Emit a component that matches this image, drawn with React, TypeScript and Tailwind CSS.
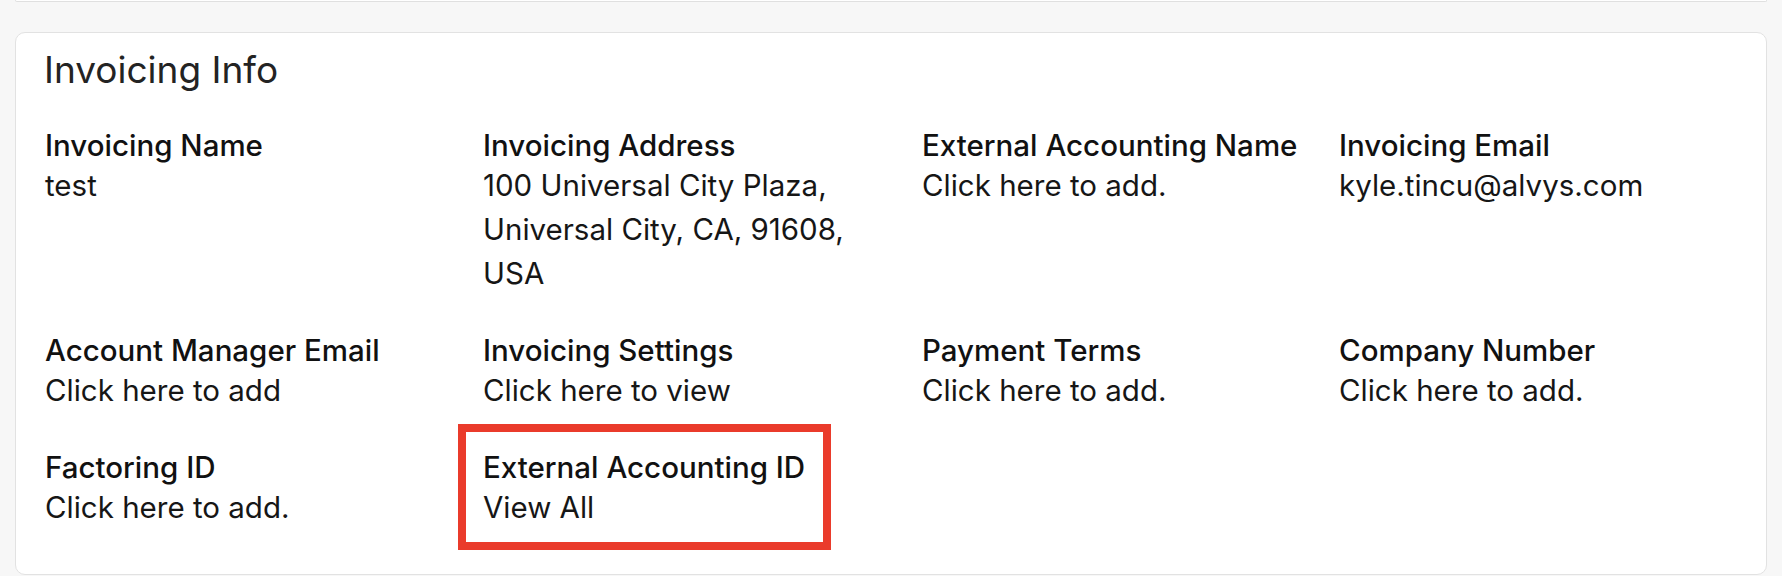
const fields: { label: string; value: React.ReactNode; highlight?: boolean }[] = [
  { label: 'Invoicing Name', value: 'test' },
  {
    label: 'Invoicing Address',
    value: (
      <>
        100 Universal City Plaza,
        <br />
        Universal City, CA, 91608,
        <br />
        USA
      </>
    ),
  },
  { label: 'External Accounting Name', value: 'Click here to add.' },
  { label: 'Invoicing Email', value: 'kyle.tincu@alvys.com' },
  { label: 'Account Manager Email', value: 'Click here to add' },
  { label: 'Invoicing Settings', value: 'Click here to view' },
  { label: 'Payment Terms', value: 'Click here to add.' },
  { label: 'Company Number', value: 'Click here to add.' },
  { label: 'Factoring ID', value: 'Click here to add.' },
  { label: 'External Accounting ID', value: 'View All', highlight: true },
]

function Field({ label, value, highlight }: { label: string; value: React.ReactNode; highlight?: boolean }) {
  return (
    <div className="relative">
      {highlight && (
        <div className="pointer-events-none absolute -left-[25px] -top-[25px] h-[126px] w-[373px] border-[8px] border-[#ea3b2b]" />
      )}
      <div className="text-[29.5px] font-medium leading-[36px] text-[#111111]">{label}</div>
      <div className="text-[29.5px] font-normal leading-[44px] text-[#161616]">{value}</div>
    </div>
  )
}

export default function App() {
  return (
    <div className="min-h-screen bg-[#f7f7f7] font-['Inter',sans-serif]">
      {/* card above, only its bottom edge shows */}
      <div className="mx-[15px] h-[2px] rounded-b-md border-x border-b border-[#e0e0e0] bg-white" />

      {/* Invoicing Info */}
      <section className="mx-[15px] mt-[30px] h-[543px] rounded-[10px] border border-[#e2e2e2] bg-white pl-[29px] pt-[15px]">
        <h2 className="-ml-[1px] text-[37px] font-normal leading-[44px] text-[#232323]">Invoicing Info</h2>
        <div className="mt-[35px] grid grid-cols-[438px_439px_417px_1fr] gap-y-[37px]">
          {fields.map((f) => (
            <Field key={f.label} label={f.label} value={f.value} highlight={f.highlight} />
          ))}
        </div>
      </section>
    </div>
  )
}
